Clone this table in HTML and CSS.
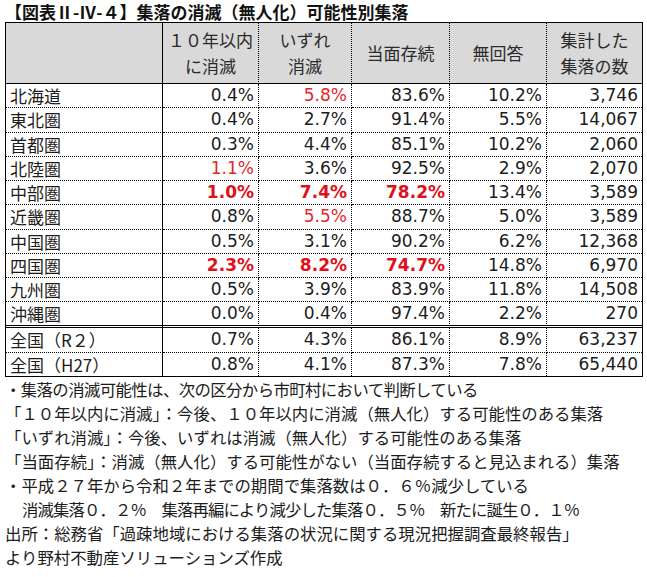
FILE: index.html
```html
<!DOCTYPE html>
<html lang="ja">
<head>
<meta charset="utf-8">
<link rel="stylesheet" href="styles.css">
</head>
<body>
<div class="page">
  <h1 class="title">【図表Ⅱ-Ⅳ-４】集落の消滅（無人化）可能性別集落</h1>
  <table class="tbl">
    <colgroup>
      <col class="c1"><col class="c2"><col class="c3"><col class="c4"><col class="c5"><col class="c6">
    </colgroup>
    <thead>
      <tr class="head">
        <th class="corner"></th>
        <th>１０年以内<br>に消滅</th>
        <th>いずれ<br>消滅</th>
        <th>当面存続</th>
        <th>無回答</th>
        <th class="last">集計した<br>集落の数</th>
      </tr>
    </thead>
    <tbody>
      <tr><td class="lbl">北海道</td><td>0.4%</td><td class="red">5.8%</td><td>83.6%</td><td>10.2%</td><td class="last">3,746</td></tr>
      <tr><td class="lbl">東北圏</td><td>0.4%</td><td>2.7%</td><td>91.4%</td><td>5.5%</td><td class="last">14,067</td></tr>
      <tr><td class="lbl">首都圏</td><td>0.3%</td><td>4.4%</td><td>85.1%</td><td>10.2%</td><td class="last">2,060</td></tr>
      <tr><td class="lbl">北陸圏</td><td class="red">1.1%</td><td>3.6%</td><td>92.5%</td><td>2.9%</td><td class="last">2,070</td></tr>
      <tr><td class="lbl">中部圏</td><td class="red bold">1.0%</td><td class="red bold">7.4%</td><td class="red bold">78.2%</td><td>13.4%</td><td class="last">3,589</td></tr>
      <tr><td class="lbl">近畿圏</td><td>0.8%</td><td class="red">5.5%</td><td>88.7%</td><td>5.0%</td><td class="last">3,589</td></tr>
      <tr><td class="lbl">中国圏</td><td>0.5%</td><td>3.1%</td><td>90.2%</td><td>6.2%</td><td class="last">12,368</td></tr>
      <tr><td class="lbl">四国圏</td><td class="red bold">2.3%</td><td class="red bold">8.2%</td><td class="red bold">74.7%</td><td>14.8%</td><td class="last">6,970</td></tr>
      <tr><td class="lbl">九州圏</td><td>0.5%</td><td>3.9%</td><td>83.9%</td><td>11.8%</td><td class="last">14,508</td></tr>
      <tr class="pre-total"><td class="lbl">沖縄圏</td><td>0.0%</td><td>0.4%</td><td>97.4%</td><td>2.2%</td><td class="last">270</td></tr>
      <tr><td class="lbl">全国（R２）</td><td>0.7%</td><td>4.3%</td><td>86.1%</td><td>8.9%</td><td class="last">63,237</td></tr>
      <tr class="final"><td class="lbl">全国（H27）</td><td>0.8%</td><td>4.1%</td><td>87.3%</td><td>7.8%</td><td class="last">65,440</td></tr>
    </tbody>
  </table>
  <div class="notes">
    <p class="tight">・集落の消滅可能性は、次の区分から市町村において判断している</p>
    <p>「１０年以内に消滅」：今後、１０年以内に消滅（無人化）する可能性のある集落</p>
    <p>「いずれ消滅」：今後、いずれは消滅（無人化）する可能性のある集落</p>
    <p>「当面存続」：消滅（無人化）する可能性がない（当面存続すると見込まれる）集落</p>
    <p>・平成２７年から令和２年までの期間で集落数は０．６％減少している</p>
    <p class="indent">消滅集落０．２％　集落再編により減少した集落０．５％　新たに誕生０．１％</p>
    <p>出所：総務省「過疎地域における集落の状況に関する現況把握調査最終報告」</p>
    <p>より野村不動産ソリューションズ作成</p>
  </div>
</div>
</body>
</html>
```

FILE: styles.css
```css
html, body {
  margin: 0;
  padding: 0;
  background: #ffffff;
}

body {
  font-family: "DejaVu Sans", "Noto Sans CJK JP", sans-serif;
  color: #1c1c1c;
}

.page {
  padding: 1px 0 0 5px;
  width: 638px;
}

.title {
  margin: 0;
  font-size: 17px;
  font-weight: bold;
  line-height: 21px;
  height: 21px;
  white-space: nowrap;
  color: #111;
  font-family: "Noto Sans CJK JP", sans-serif;
}

.tbl {
  border-collapse: separate;
  border-spacing: 0;
  table-layout: fixed;
  width: 638px;
  border: 1px solid #000;
  font-size: 17px;
}

.c1 { width: 157px; }
.c2 { width: 96px; }
.c3 { width: 93px; }
.c4 { width: 98px; }
.c5 { width: 97px; }
.c6 { width: 95px; }

.tbl th {
  background: #d9d9d9;
  font-weight: normal;
  font-family: "Noto Sans CJK JP", sans-serif;
  font-size: 17px;
  line-height: 26px;
  height: 60px;
  padding: 0;
  text-align: center;
  color: #2a2a2a;
  border-right: 1px dotted #000;
  border-bottom: 1px solid #000;
}

.tbl th.corner {
  border-right: 1px solid #000;
}

.tbl .last {
  border-right: none !important;
}

.tbl td {
  height: 23.25px;
  padding: 0 4px 0 0;
  line-height: 23px;
  text-align: right;
  white-space: nowrap;
  border-right: 1px dotted #000;
  border-bottom: 1px dotted #000;
}

.tbl td.lbl {
  text-align: left;
  padding: 0 0 0 4px;
  font-family: "Noto Sans CJK JP", sans-serif;
  border-right: 1px solid #000;
}

.tbl tr.pre-total td {
  border-bottom: 3px double #000;
  height: 22.25px;
}

.tbl tr.final td {
  border-bottom: none;
}

.red {
  color: #e3262b;
}

.bold {
  font-weight: bold;
  color: #e0101a;
}

.notes {
  font-family: "Noto Sans CJK JP", sans-serif;
  font-size: 16.4px;
  line-height: 24px;
  white-space: nowrap;
  color: #1c1c1c;
}

.notes p {
  margin: 0;
}

.notes .tight {
  letter-spacing: -0.6px;
}

.notes .indent {
  padding-left: 17px;
  letter-spacing: -0.9px;
}
```
